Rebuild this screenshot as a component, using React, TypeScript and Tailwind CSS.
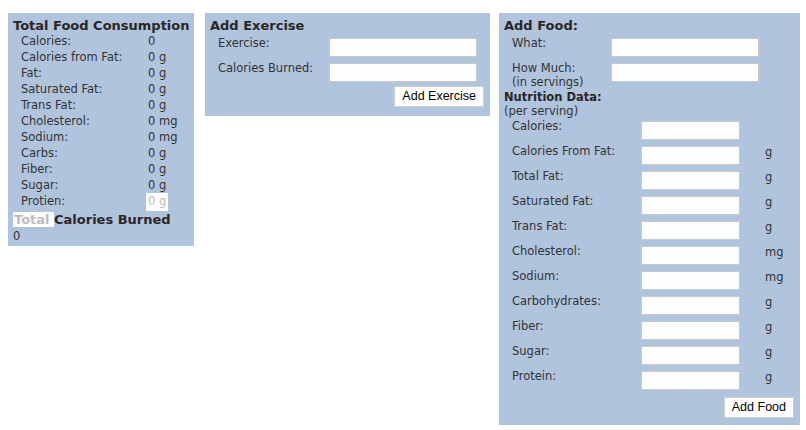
const totals = [
  { label: "Calories:", value: "0" },
  { label: "Calories from Fat:", value: "0 g" },
  { label: "Fat:", value: "0 g" },
  { label: "Saturated Fat:", value: "0 g" },
  { label: "Trans Fat:", value: "0 g" },
  { label: "Cholesterol:", value: "0 mg" },
  { label: "Sodium:", value: "0 mg" },
  { label: "Carbs:", value: "0 g" },
  { label: "Fiber:", value: "0 g" },
  { label: "Sugar:", value: "0 g" },
];

const nutrition = [
  { label: "Calories:", unit: "" },
  { label: "Calories From Fat:", unit: "g" },
  { label: "Total Fat:", unit: "g" },
  { label: "Saturated Fat:", unit: "g" },
  { label: "Trans Fat:", unit: "g" },
  { label: "Cholesterol:", unit: "mg" },
  { label: "Sodium:", unit: "mg" },
  { label: "Carbohydrates:", unit: "g" },
  { label: "Fiber:", unit: "g" },
  { label: "Sugar:", unit: "g" },
  { label: "Protein:", unit: "g" },
];

const Field = ({ className }: { className: string }) => (
  <input
    type="text"
    className={`h-[19px] mt-[4px] border border-[#c9c9c9] bg-[#fdfdfd] outline-none ${className}`}
  />
);

const Button = ({ children }: { children: string }) => (
  <button className="h-[21px] px-[7px] bg-white border border-[#cfcfcf] text-black text-[12.5px] leading-none font-['Liberation_Sans',Arial,sans-serif]">
    {children}
  </button>
);

export default function App() {
  return (
    <div className="min-h-screen bg-white flex items-start pl-[8px] pt-[13px] text-[#333] text-[11.5px] font-['DejaVu_Sans',Verdana,sans-serif]">
      {/* totals */}
      <div className="w-[186px] bg-[#b0c4de] px-[5px] pt-[5px] pb-[2px]">
        <h2 className="whitespace-nowrap text-[13px] font-bold leading-[16px] text-[#2b2626]">
          Total Food Consumption
        </h2>
        <div className="pl-[8px]">
          {totals.map((t) => (
            <div key={t.label} className="flex h-[16px] items-center">
              <span className="w-[127px]">{t.label}</span>
              <span>{t.value}</span>
            </div>
          ))}
          <div className="flex h-[16px] items-center">
            <span className="w-[125px]">Protien:</span>
            <span className="bg-white px-[2px] text-[#bdbdbd]">0 g</span>
          </div>
        </div>
        <h2 className="mt-[2px] whitespace-nowrap text-[13px] font-bold leading-[16px] text-[#2b2626]">
          <span className="bg-white text-[#bdbdbd] pl-[1px]">Total </span>
          Calories Burned
        </h2>
        <div className="leading-[16px]">0</div>
      </div>

      {/* exercise */}
      <div className="ml-[11px] w-[285px] bg-[#b0c4de] px-[5px] pt-[5px] pb-[9px]">
        <h2 className="text-[13px] font-bold leading-[16px] text-[#2b2626]">Add Exercise</h2>
        <div className="flex h-[25px] items-start">
          <span className="w-[119px] pl-[8px] pt-[2px] leading-[14px]">Exercise:</span>
          <Field className="w-[148px]" />
        </div>
        <div className="flex h-[25px] items-start">
          <span className="w-[119px] pl-[8px] pt-[2px] leading-[14px]">Calories Burned:</span>
          <Field className="w-[148px]" />
        </div>
        <div className="flex justify-end mt-[2px] pr-[1px]">
          <Button>Add Exercise</Button>
        </div>
      </div>

      {/* food */}
      <div className="ml-[9px] w-[301px] bg-[#b0c4de] px-[5px] pt-[5px] pb-[7px]">
        <h2 className="text-[13px] font-bold leading-[16px] text-[#2b2626]">Add Food:</h2>
        <div className="flex h-[25px] items-start">
          <span className="w-[107px] pl-[8px] pt-[2px] leading-[14px]">What:</span>
          <Field className="w-[148px]" />
        </div>
        <div className="flex h-[31px] items-start">
          <span className="w-[107px] pl-[8px] pt-[2px] leading-[14px]">
            How Much:
            <br />
            (in servings)
          </span>
          <Field className="w-[148px]" />
        </div>
        <div className="leading-[14px]">
          <div className="font-bold text-[#2b2626]">Nutrition Data:</div>
          <div>(per serving)</div>
        </div>
        <div className="-mt-[1px]">
          {nutrition.map((n) => (
            <div key={n.label} className="flex h-[25px] items-start">
              <span className="w-[137px] pl-[8px] pt-[2px] leading-[14px]">{n.label}</span>
              <Field className="w-[99px]" />
              <span className="ml-[25px] pt-[3px] leading-[14px]">{n.unit}</span>
            </div>
          ))}
        </div>
        <div className="flex justify-end mt-[5px] pr-[1px]">
          <Button>Add Food</Button>
        </div>
      </div>
    </div>
  );
}
